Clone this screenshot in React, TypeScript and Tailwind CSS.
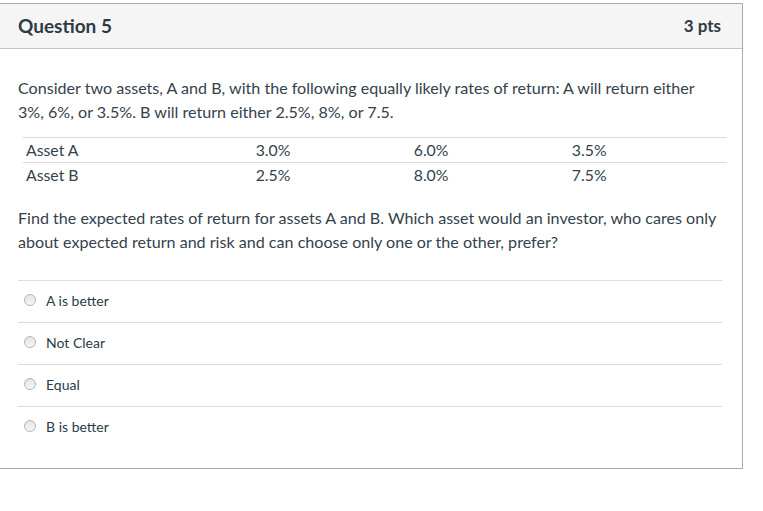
import React from 'react';

// One quiz question card, Canvas-style
const rows = [
  { name: 'Asset A', values: ['3.0%', '6.0%', '3.5%'] },
  { name: 'Asset B', values: ['2.5%', '8.0%', '7.5%'] },
];

const answers = ['A is better', 'Not Clear', 'Equal', 'B is better'];

const Radio: React.FC = () => (
  <span className="inline-block h-[12px] w-[12px] shrink-0 rounded-full border border-[#b5b5b5] bg-gradient-to-b from-[#e4e4e4] to-[#f7f7f7]" />
);

const App: React.FC = () => {
  return (
    <div
      className="h-[511px] w-[763px] bg-white pt-[3px] text-[#2d3b45]"
      style={{ fontFamily: 'Lato, "Open Sans", sans-serif' }}
    >
      <div className="w-[743px] border-t border-r border-b border-[#a9a9a9]">
        {/* header */}
        <div className="flex h-[45px] items-center justify-between border-b border-[#c4c4c4] bg-[#f5f5f5] pl-[18px] pr-[21px]">
          <h2 className="text-[19px] font-bold">Question 5</h2>
          <span className="text-[17px] font-bold">3 pts</span>
        </div>

        {/* body */}
        <div className="pl-[18px] pr-[20px] pt-[27px] pb-[20px]">
          <p className="text-[16.1px] leading-[24px] text-[#34424c]">
            Consider two assets, A and B, with the following equally likely rates of return: A will return either
            3%, 6%, or 3.5%. B will return either 2.5%, 8%, or 7.5.
          </p>

          <table className="mt-[13px] ml-[5px] w-[704px] border-collapse text-[15.8px] text-[#34424c]">
            <tbody>
              {rows.map((r) => (
                <tr key={r.name} className="h-[25px] border-t border-[#d9d9d9]">
                  <td className="w-[228px] pl-[3px] align-middle">{r.name}</td>
                  {r.values.map((v) => (
                    <td key={v} className="w-[157px] pl-[3px] align-middle">
                      {v}
                    </td>
                  ))}
                </tr>
              ))}
            </tbody>
          </table>

          <p className="mt-[18px] text-[16.1px] leading-[24px] text-[#34424c]">
            Find the expected rates of return for assets A and B. Which asset would an investor, who cares only
            about expected return and risk and can choose only one or the other, prefer?
          </p>

          <div className="mt-[26px] w-[704px]">
            {answers.map((a) => (
              <div key={a} className="flex h-[42px] items-center gap-[10px] border-t border-[#dcdcdc] pl-[6px] pb-[2px]">
                <Radio />
                <span className="text-[14px]">{a}</span>
              </div>
            ))}
          </div>
        </div>
      </div>
    </div>
  );
};

export default App;
